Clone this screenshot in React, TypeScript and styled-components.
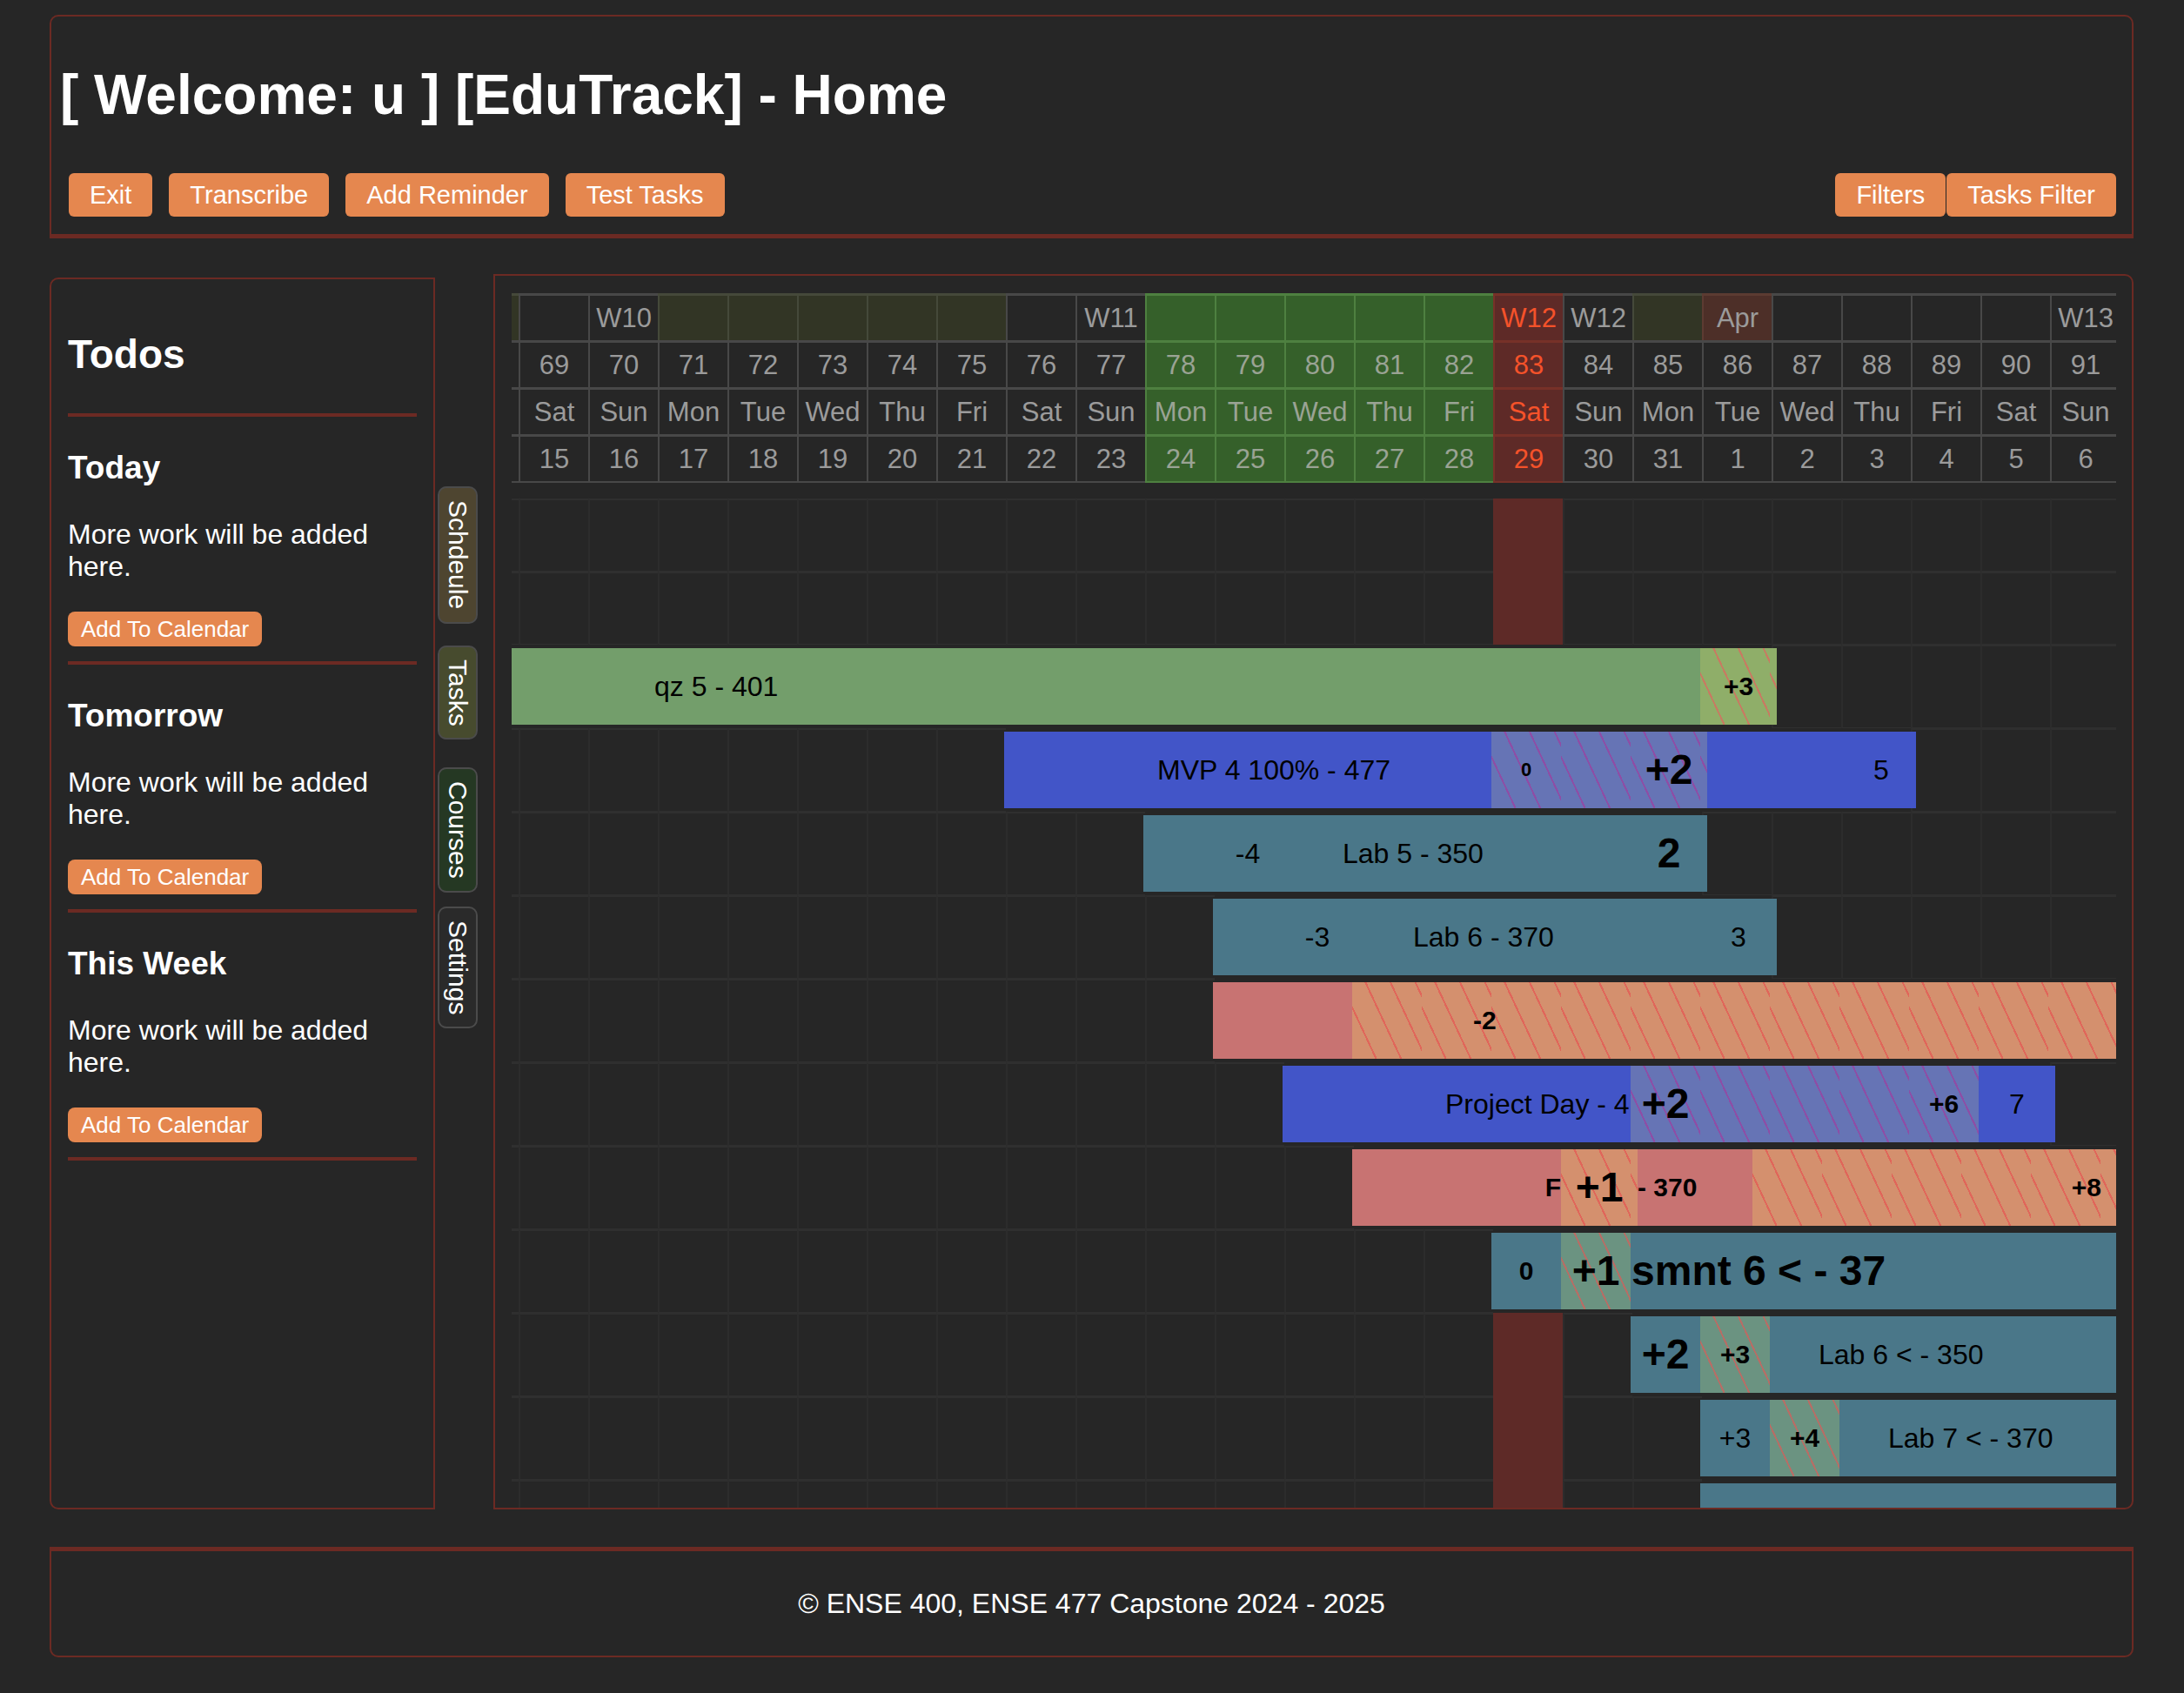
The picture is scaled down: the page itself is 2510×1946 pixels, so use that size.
import React from 'react'
import styled, { createGlobalStyle, css } from 'styled-components'

const BORDER = '#6c2a23'
const FONT = '"Liberation Sans", Arial, Helvetica, sans-serif'

const GlobalStyle = createGlobalStyle`
  html, body {
    margin: 0;
    padding: 0;
    background: #262626;
  }
  body {
    font-family: ${FONT};
    color: #fff;
  }
  * {
    box-sizing: border-box;
  }
`

const Page = styled.div`
  padding: 17px 58px 41px 57px;
`

/* ---------- header ---------- */

const Header = styled.header`
  border: 2px solid ${BORDER};
  border-bottom-width: 5px;
  border-radius: 10px 10px 0 0;
  padding: 53px 10px 20px;
`

const Title = styled.h1`
  margin: 0 0 53px;
  font-size: 64px;
  line-height: 74px;
  font-weight: bold;
`

const Toolbar = styled.div`
  display: flex;
  justify-content: space-between;
  align-items: center;
`

const ButtonGroup = styled.div<{ $gap: number; $side: 'left' | 'right' }>`
  display: flex;
  gap: ${p => p.$gap}px;
  ${p => (p.$side === 'left' ? 'margin-left: 10px;' : 'margin-right: 8px;')}
`

const Button = styled.button`
  height: 50px;
  padding: 0 24px;
  border: none;
  border-radius: 6px;
  background: #e5874f;
  color: #fff;
  font-family: ${FONT};
  font-size: 29px;
`

/* ---------- layout ---------- */

const Main = styled.main`
  display: flex;
  align-items: flex-start;
  margin-top: 41px;
  height: 1420px;
`

/* ---------- sidebar ---------- */

const Sidebar = styled.aside`
  flex: none;
  width: 443px;
  height: 1416px;
  margin-top: 4px;
  border: 2px solid ${BORDER};
  border-radius: 10px 0 0 10px;
  padding: 20px 19px;
`

const SideTitle = styled.h2`
  margin: 40px 0 41px;
  font-size: 46px;
  line-height: 53px;
  font-weight: bold;
`

const Divider = styled.hr<{ $top?: number }>`
  border: none;
  height: 4px;
  margin: ${p => p.$top ?? 0}px 0 0;
  background: ${BORDER};
`

const SectionTitle = styled.h3`
  margin: 37px 0;
  font-size: 37px;
  line-height: 43px;
  font-weight: bold;
`

const SectionText = styled.p`
  margin: 0 0 33px;
  font-size: 32px;
  line-height: 37px;
`

const SmallButton = styled.button`
  display: block;
  height: 40px;
  padding: 0 15px;
  border: none;
  border-radius: 8px;
  background: #e5874f;
  color: #fff;
  font-family: ${FONT};
  font-size: 26px;
`

/* ---------- vertical tabs ---------- */

const TabRail = styled.nav`
  flex: none;
  width: 46px;
  margin: 244px 0 0 3px;
  display: flex;
  flex-direction: column;
`

const TabSlot = styled.div`
  height: 158px;
  display: flex;
  align-items: center;
  justify-content: center;
`

const Tab = styled.div<{ $bg: string }>`
  writing-mode: vertical-rl;
  width: 46px;
  padding: 14px 0;
  border: 2px solid #4b4b4b;
  border-radius: 10px;
  background: ${p => p.$bg};
  color: #fff;
  font-size: 30px;
  line-height: 42px;
  text-align: center;
`

/* ---------- calendar ---------- */

const Calendar = styled.section`
  flex: 1;
  height: 1420px;
  margin-left: 18px;
  border: 2px solid ${BORDER};
  border-radius: 0 10px 10px 0;
  padding: 20px 18px 0 19px;
  overflow: hidden;
`

const Viewport = styled.div`
  overflow: hidden;
`

const Track = styled.div`
  width: 1920px;
  margin-left: -72px;
`

type HeadKind = 'plain' | 'olive' | 'green' | 'today' | 'month'

const headTone: Record<HeadKind, { bg: string; line: string; ink: string }> = {
  plain: { bg: 'transparent', line: '#484848', ink: '#9b9b9b' },
  olive: { bg: '#323525', line: '#45493a', ink: '#9b9b9b' },
  green: { bg: '#35602a', line: '#4e8040', ink: '#9aa394' },
  today: { bg: '#5e2a27', line: '#773128', ink: '#f5522a' },
  month: { bg: '#4d2f28', line: '#5c3b32', ink: '#9b9b9b' },
}

const HeadGrid = styled.div`
  display: grid;
  grid-template-columns: repeat(24, 80px);
  margin-bottom: 18px;
`

const HeadCell = styled.div<{ $kind: HeadKind; $last?: boolean }>`
  height: ${p => (p.$last ? 56 : 54)}px;
  display: flex;
  align-items: center;
  justify-content: center;
  border-top: 3px solid ${p => headTone[p.$kind].line};
  border-left: 2px solid ${p => headTone[p.$kind].line};
  ${p => p.$last && `border-bottom: 2px solid ${headTone[p.$kind].line};`}
  background: ${p => headTone[p.$kind].bg};
  color: ${p => headTone[p.$kind].ink};
  font-size: 31px;
  white-space: nowrap;
`

const BodyRow = styled.div<{ $h: number }>`
  display: grid;
  grid-template-columns: repeat(24, 80px);
  height: ${p => p.$h}px;
`

const DayCell = styled.div<{ $today: boolean }>`
  border-left: 2px solid #2c2c2c;
  border-top: 2px solid #2f2f2f;
  border-bottom: 1px solid #2f2f2f;
  ${p =>
    p.$today &&
    css`
      background: #5e2a27;
      border-color: #5e2a27;
    `}
`

type Tone = 'green' | 'greenHatch' | 'blue' | 'blueHatch' | 'teal' | 'tealHatch' | 'salmon' | 'orangeHatch'

const tones: Record<Tone, { base: string; stripe?: string }> = {
  green: { base: '#739e6b' },
  greenHatch: { base: '#8fae69', stripe: '#c77b62' },
  blue: { base: '#4255c8' },
  blueHatch: { base: '#6674b5', stripe: '#8d4ea6' },
  teal: { base: '#4a7789' },
  tealHatch: { base: '#6b9381', stripe: '#b56e66' },
  salmon: { base: '#c87372' },
  orangeHatch: { base: '#d4906e', stripe: '#e0665a' },
}

type Align = 'left' | 'center' | 'right'
type LabelKind = 'reg' | 'bold' | 'big' | 'tiny'

const Bar = styled.div<{ $span: number }>`
  grid-column: span ${p => p.$span};
  justify-self: start;
  align-self: center;
  height: 88px;
  margin-left: -2px;
  display: flex;
  position: relative;
  z-index: 1;
`

const Seg = styled.div<{ $tone: Tone; $align: Align; $pad: number }>`
  flex: none;
  height: 100%;
  display: flex;
  align-items: center;
  overflow: hidden;
  white-space: nowrap;
  justify-content: ${p => (p.$align === 'left' ? 'flex-start' : p.$align === 'right' ? 'flex-end' : 'center')};
  padding-left: ${p => (p.$align === 'left' ? p.$pad : 0)}px;
  padding-right: ${p => (p.$align === 'right' ? p.$pad : 0)}px;
  background-color: ${p => tones[p.$tone].base};
  ${p =>
    tones[p.$tone].stripe &&
    css`
      background-image: repeating-linear-gradient(
        65deg,
        transparent 0 24px,
        ${tones[p.$tone].stripe} 24px 26px
      );
      background-size: 80px 100%;
    `}
`

const labelFont: Record<LabelKind, string> = {
  reg: 'font-size: 32px; font-weight: 400;',
  bold: 'font-size: 30px; font-weight: 700;',
  big: 'font-size: 48px; font-weight: 700;',
  tiny: 'font-size: 22px; font-weight: 700;',
}

const Label = styled.span<{ $kind: LabelKind }>`
  min-width: 0;
  overflow: hidden;
  color: #000;
  line-height: 1.15;
  ${p => labelFont[p.$kind]}
`

/* ---------- footer ---------- */

const Footer = styled.footer`
  margin-top: 43px;
  height: 127px;
  border: 2px solid ${BORDER};
  border-top-width: 5px;
  border-radius: 0 0 10px 10px;
  display: flex;
  align-items: center;
  justify-content: center;
  font-size: 32px;
`

/* ---------- data ---------- */

const FIRST = 68
const LAST = 91
const TODAY = 83

const dows = ['Fri', 'Sat', 'Sun', 'Mon', 'Tue', 'Wed', 'Thu']
const dayList = Array.from({ length: LAST - FIRST + 1 }, (_, i) => {
  const n = FIRST + i
  const date = n <= 85 ? 14 + i : n - 85
  const base: HeadKind = n >= 78 && n <= 82 ? 'green' : n === TODAY ? 'today' : 'plain'
  let top: HeadKind = base
  if ((n >= 71 && n <= 75) || n === 68 || n === 85) top = 'olive'
  if (n === 86) top = 'month'
  // the first column is scrolled almost out of view, its labels are not shown
  const visible = n > FIRST
  return { n, dow: visible ? dows[i % 7] : '', date: visible ? date : '', num: visible ? n : '', base, top }
})

const weekLabels: Record<number, string> = { 70: 'W10', 77: 'W11', 83: 'W12', 84: 'W12', 86: 'Apr', 91: 'W13' }

interface Segment {
  w: number
  tone: Tone
  text?: string
  kind?: LabelKind
  align?: Align
  pad?: number
}

interface Task {
  start: number
  span: number
  segs: Segment[]
}

const tasks: Task[] = [
  {
    start: 68,
    span: 19,
    segs: [
      { w: 1440, tone: 'green', text: 'qz 5 - 401', align: 'left', pad: 238 },
      { w: 88, tone: 'greenHatch', text: '+3', kind: 'bold' },
    ],
  },
  {
    start: 76,
    span: 13,
    segs: [
      { w: 560, tone: 'blue', text: 'MVP 4 100% - 477', align: 'left', pad: 176 },
      { w: 80, tone: 'blueHatch', text: '0', kind: 'tiny' },
      { w: 80, tone: 'blueHatch' },
      { w: 88, tone: 'blueHatch', text: '+2', kind: 'big' },
      { w: 160, tone: 'blue' },
      { w: 80, tone: 'blue', text: '5' },
    ],
  },
  {
    start: 78,
    span: 8,
    segs: [
      { w: 80, tone: 'teal' },
      { w: 80, tone: 'teal', text: '-4' },
      { w: 400, tone: 'teal', text: 'Lab 5 - 350', align: 'left', pad: 69 },
      { w: 88, tone: 'teal', text: '2', kind: 'big' },
    ],
  },
  {
    start: 79,
    span: 8,
    segs: [
      { w: 80, tone: 'teal' },
      { w: 80, tone: 'teal', text: '-3' },
      { w: 400, tone: 'teal', text: 'Lab 6 - 370', align: 'left', pad: 70 },
      { w: 88, tone: 'teal', text: '3' },
    ],
  },
  {
    start: 79,
    span: 13,
    segs: [
      { w: 160, tone: 'salmon' },
      { w: 888, tone: 'orangeHatch', text: '-2', kind: 'bold', align: 'left', pad: 139 },
    ],
  },
  {
    start: 80,
    span: 11,
    segs: [
      { w: 400, tone: 'blue', text: 'Project Day - 477', align: 'left', pad: 187 },
      { w: 80, tone: 'blueHatch', text: '+2', kind: 'big' },
      { w: 240, tone: 'blueHatch' },
      { w: 80, tone: 'blueHatch', text: '+6', kind: 'bold' },
      { w: 88, tone: 'blue', text: '7' },
    ],
  },
  {
    start: 81,
    span: 11,
    segs: [
      { w: 240, tone: 'salmon', text: 'F', kind: 'bold', align: 'right', pad: 0 },
      { w: 88, tone: 'orangeHatch', text: '+1', kind: 'big' },
      { w: 132, tone: 'salmon', text: '- 370', kind: 'bold', align: 'left', pad: 0 },
      { w: 428, tone: 'orangeHatch', text: '+8', kind: 'bold', align: 'right', pad: 27 },
    ],
  },
  {
    start: 83,
    span: 9,
    segs: [
      { w: 80, tone: 'teal', text: '0', kind: 'bold' },
      { w: 80, tone: 'tealHatch', text: '+1', kind: 'big' },
      { w: 568, tone: 'teal', text: 'smnt 6 < - 37', kind: 'big', align: 'left', pad: 1 },
    ],
  },
  {
    start: 85,
    span: 7,
    segs: [
      { w: 80, tone: 'teal', text: '+2', kind: 'big' },
      { w: 80, tone: 'tealHatch', text: '+3', kind: 'bold' },
      { w: 408, tone: 'teal', text: 'Lab 6 < - 350', align: 'left', pad: 56 },
    ],
  },
  {
    start: 86,
    span: 6,
    segs: [
      { w: 80, tone: 'teal', text: '+3' },
      { w: 80, tone: 'tealHatch', text: '+4', kind: 'bold' },
      { w: 328, tone: 'teal', text: 'Lab 7 < - 370', align: 'left', pad: 56 },
    ],
  },
  {
    start: 86,
    span: 6,
    segs: [{ w: 488, tone: 'teal' }],
  },
]

const todoSections = ['Today', 'Tomorrow', 'This Week']

const tabs = [
  { label: 'Schdeule', bg: '#4e4530' },
  { label: 'Tasks', bg: '#474b2e' },
  { label: 'Courses', bg: '#253823' },
  { label: 'Settings', bg: '#2a2a2a' },
]

/* ---------- components ---------- */

function TimelineRow({ task, height }: { task?: Task; height: number }) {
  const items: React.ReactNode[] = []
  for (let d = FIRST; d <= LAST; d++) {
    if (task && d === task.start) {
      const width = task.segs.reduce((sum, s) => sum + s.w, 0)
      items.push(
        <Bar key={d} $span={task.span} style={{ width }}>
          {task.segs.map((s, i) => (
            <Seg key={i} $tone={s.tone} $align={s.align ?? 'center'} $pad={s.pad ?? 0} style={{ width: s.w }}>
              {s.text && <Label $kind={s.kind ?? 'reg'}>{s.text}</Label>}
            </Seg>
          ))}
        </Bar>
      )
      d += task.span - 1
      continue
    }
    items.push(<DayCell key={d} $today={d === TODAY} />)
  }
  return <BodyRow $h={height}>{items}</BodyRow>
}

const App = () => {
  return (
    <>
      <GlobalStyle />
      <Page>
        <Header>
          <Title>[ Welcome: u ] [EduTrack] - Home</Title>
          <Toolbar>
            <ButtonGroup $gap={19} $side="left">
              <Button>Exit</Button>
              <Button>Transcribe</Button>
              <Button>Add Reminder</Button>
              <Button>Test Tasks</Button>
            </ButtonGroup>
            <ButtonGroup $gap={1} $side="right">
              <Button>Filters</Button>
              <Button>Tasks Filter</Button>
            </ButtonGroup>
          </Toolbar>
        </Header>

        <Main>
          <Sidebar>
            <SideTitle>Todos</SideTitle>
            <Divider />
            {todoSections.map(name => (
              <div key={name}>
                <SectionTitle>{name}</SectionTitle>
                <SectionText>More work will be added here.</SectionText>
                <SmallButton>Add To Calendar</SmallButton>
                <Divider $top={17} />
              </div>
            ))}
          </Sidebar>

          <TabRail>
            {tabs.map(t => (
              <TabSlot key={t.label}>
                <Tab $bg={t.bg}>{t.label}</Tab>
              </TabSlot>
            ))}
          </TabRail>

          <Calendar>
            <Viewport>
              <Track>
                <HeadGrid>
                  {dayList.map(d => (
                    <HeadCell key={`w${d.n}`} $kind={d.top}>
                      {weekLabels[d.n] ?? ''}
                    </HeadCell>
                  ))}
                  {dayList.map(d => (
                    <HeadCell key={`n${d.n}`} $kind={d.base}>
                      {d.num}
                    </HeadCell>
                  ))}
                  {dayList.map(d => (
                    <HeadCell key={`d${d.n}`} $kind={d.base}>
                      {d.dow}
                    </HeadCell>
                  ))}
                  {dayList.map(d => (
                    <HeadCell key={`t${d.n}`} $kind={d.base} $last>
                      {d.date}
                    </HeadCell>
                  ))}
                </HeadGrid>

                <TimelineRow height={84} />
                <TimelineRow height={84} />
                {tasks.map((t, i) => (
                  <TimelineRow key={i} task={t} height={96} />
                ))}
                <TimelineRow height={96} />
              </Track>
            </Viewport>
          </Calendar>
        </Main>

        <Footer>© ENSE 400, ENSE 477 Capstone 2024 - 2025</Footer>
      </Page>
    </>
  )
}

export default App
